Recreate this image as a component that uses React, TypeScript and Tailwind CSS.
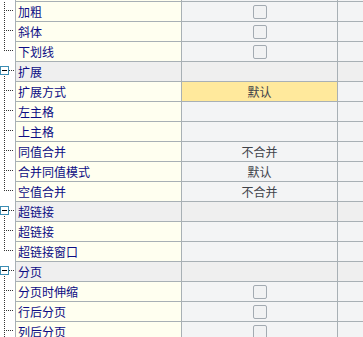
import React from 'react'

type Row = {
  label: string
  kind: 'group' | 'child'
  last?: boolean
  value?: string
  check?: boolean
  active?: boolean
}

const rows: Row[] = [
  { label: '加粗', kind: 'child', check: true },
  { label: '斜体', kind: 'child', check: true },
  { label: '下划线', kind: 'child', check: true, last: true },
  { label: '扩展', kind: 'group' },
  { label: '扩展方式', kind: 'child', value: '默认', active: true },
  { label: '左主格', kind: 'child' },
  { label: '上主格', kind: 'child' },
  { label: '同值合并', kind: 'child', value: '不合并' },
  { label: '合并同值模式', kind: 'child', value: '默认' },
  { label: '空值合并', kind: 'child', value: '不合并', last: true },
  { label: '超链接', kind: 'group' },
  { label: '超链接', kind: 'child' },
  { label: '超链接窗口', kind: 'child', last: true },
  { label: '分页', kind: 'group' },
  { label: '分页时伸缩', kind: 'child', check: true },
  { label: '行后分页', kind: 'child', check: true },
  { label: '列后分页', kind: 'child', check: true },
]

const TreeMark = ({ row }: { row: Row }) => {
  if (row.kind === 'group') {
    return (
      <svg width="15" height="20" className="block">
        <line x1="4.5" y1="14" x2="4.5" y2="20" stroke="#333" strokeDasharray="1 1" />
        <line x1="9" y1="8.5" x2="14" y2="8.5" stroke="#333" strokeDasharray="1 1" />
        <rect x="0.5" y="4.5" width="8" height="8" fill="#fff" stroke="#3c8db4" />
        <line x1="2" y1="8.5" x2="7" y2="8.5" stroke="#000" />
      </svg>
    )
  }
  return (
    <svg width="15" height="20" className="block">
      <line x1="4.5" y1="0" x2="4.5" y2={row.last ? 9 : 20} stroke="#333" strokeDasharray="1 1" />
      <line x1="6" y1="8.5" x2="14" y2="8.5" stroke="#333" strokeDasharray="1 1" />
    </svg>
  )
}

const Check = () => (
  <div className="w-[14px] h-[14px] rounded-[2px] border border-[#a3abb2] bg-[#f1f2f3]" />
)

export default function App() {
  return (
    <div
      className="w-[363px] h-[337px] overflow-hidden bg-white text-[12px] leading-none"
      style={{ fontFamily: '"Noto Sans CJK SC", "Noto Sans", sans-serif' }}
    >
      <div className="flex h-[2px]">
        <div className="w-[15px]" />
        <div className="w-[166px] border-l border-b border-[#a8b0b5] bg-[#fffff0]" />
        <div className="w-[156px] border-l border-b border-[#a8b0b5] bg-[#f3f4f5]" />
        <div className="flex-1 border-l border-b border-[#a8b0b5] bg-[#f3f4f5]" />
      </div>
      {rows.map((row, i) => {
        const group = row.kind === 'group'
        return (
          <div key={i} className="flex h-[20px]">
            <div className="w-[15px]">
              <TreeMark row={row} />
            </div>
            <div
              className={`w-[166px] border-l border-b border-[#a8b0b5] pl-[2px] flex items-center text-[#0c0c84] ${
                group ? 'bg-[#efefef]' : 'bg-[#fffff0]'
              }`}
            >
              {row.label}
            </div>
            <div
              className={`w-[156px] border-l border-b border-[#a8b0b5] flex items-center justify-center text-[#3f434a] ${
                group ? 'bg-[#efefef]' : row.active ? 'bg-[#ffe99c]' : 'bg-[#f3f4f5]'
              }`}
            >
              {row.check ? <Check /> : row.value}
            </div>
            <div
              className={`flex-1 border-l border-b border-[#a8b0b5] ${group ? 'bg-[#efefef]' : 'bg-[#f3f4f5]'}`}
            />
          </div>
        )
      })}
    </div>
  )
}
